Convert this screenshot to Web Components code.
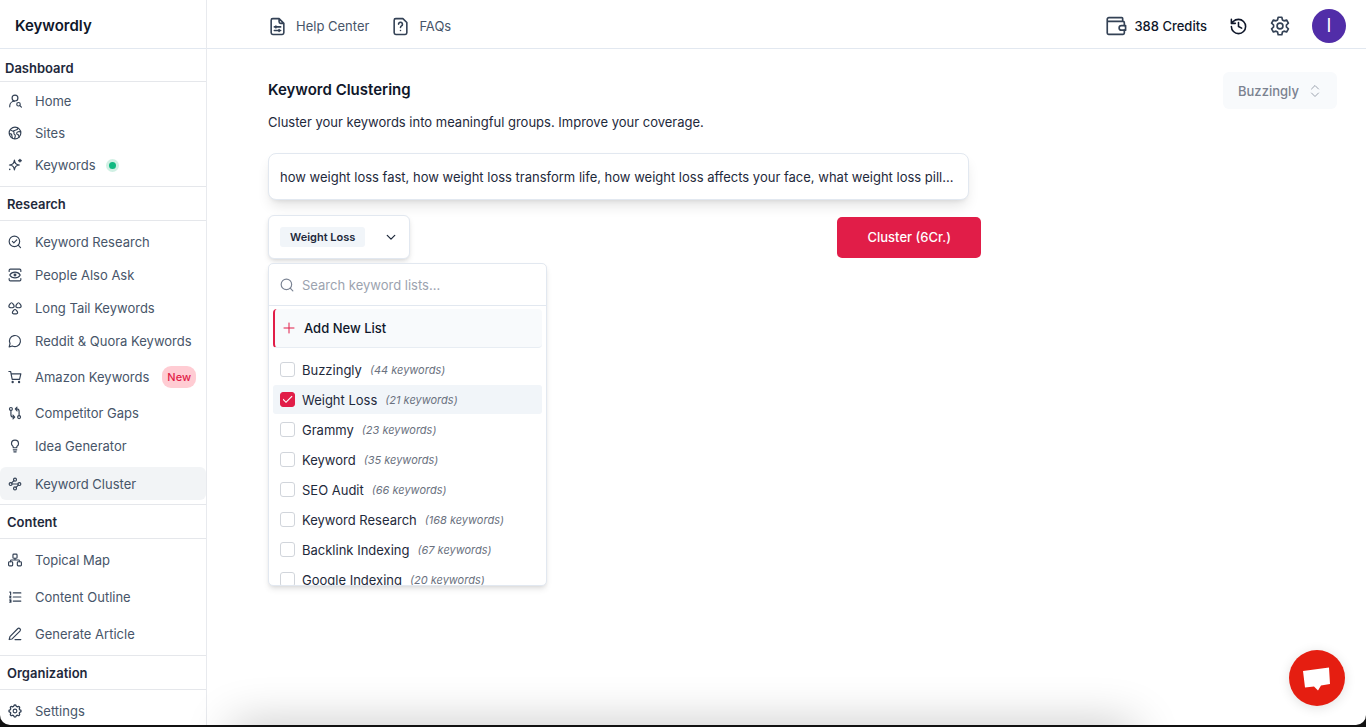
<!DOCTYPE html>
<html lang="en">
<head>
<meta charset="utf-8">
<meta name="viewport" content="width=device-width, initial-scale=1">
<title>Keywordly</title>
<style>
  body {
    margin: 0;
    background: #111;
    font-family: Inter, "Liberation Sans", sans-serif;
    font-size: 13px;
    line-height: 20px;
    color: #1e293b;
  }
</style>
</head>
<body>
<kw-app>
  <kw-sidebar slot="sidebar">
    <kw-nav-group heading="Dashboard" class="first">
      <kw-nav-item icon="user-search">Home</kw-nav-item>
      <kw-nav-item icon="world">Sites</kw-nav-item>
      <kw-nav-item icon="sparkles" dot>Keywords</kw-nav-item>
    </kw-nav-group>
    <kw-nav-group heading="Research">
      <kw-nav-item icon="search-check">Keyword Research</kw-nav-item>
      <kw-nav-item icon="eye-scan">People Also Ask</kw-nav-item>
      <kw-nav-item icon="triad">Long Tail Keywords</kw-nav-item>
      <kw-nav-item icon="message">Reddit &amp; Quora Keywords</kw-nav-item>
      <kw-nav-item icon="cart" badge="New">Amazon Keywords</kw-nav-item>
      <kw-nav-item icon="compare">Competitor Gaps</kw-nav-item>
      <kw-nav-item icon="bulb">Idea Generator</kw-nav-item>
      <kw-nav-item icon="waypoints" active>Keyword Cluster</kw-nav-item>
    </kw-nav-group>
    <kw-nav-group heading="Content" class="loose">
      <kw-nav-item icon="network">Topical Map</kw-nav-item>
      <kw-nav-item icon="list">Content Outline</kw-nav-item>
      <kw-nav-item icon="pen">Generate Article</kw-nav-item>
    </kw-nav-group>
    <kw-nav-group heading="Organization">
      <kw-nav-item icon="gear">Settings</kw-nav-item>
    </kw-nav-group>
  </kw-sidebar>

  <kw-topbar slot="topbar" credits="388 Credits" initial="I"></kw-topbar>

  <kw-cluster-page>
    <kw-list-picker selected="Weight Loss"></kw-list-picker>
  </kw-cluster-page>
</kw-app>

<script>
const ICONS = {
  "user-search": '<circle cx="12" cy="7" r="5"/><path d="M3 22v-2a8 8 0 0 1 8-7.500"/><circle cx="18" cy="17.500" r="3"/><path d="m23 22.500-2.600-2.600"/>',
  world: '<circle cx="12" cy="12" r="10"/><path d="M4 6c2 3 5 2 6 4s-1 3 1 4 2 4 0 7.500M21.500 10c-3-1-6 0-6.500 2s1 3 3 3l1 4M17 3.500c0 2.500-2 3-3 3s-2 2-4 1.500M2.500 13c2 0 4 1 4 3s0 2 1 4"/>',
  sparkles: '<path d="M11 3.500c1 6 2.500 7.500 8.500 8.500-6 1-7.500 2.500-8.500 8.500-1-6-2.500-7.500-8.500-8.500 6-1 7.500-2.500 8.500-8.500z"/><path d="M20.500 2.500v4M18.500 4.500h4M3 19.500h.01" stroke-width="2.600"/>',
  "search-check": '<circle cx="11" cy="11" r="9"/><path d="m21.500 21.500-4-4M7.500 11l2.500 2.500 5-5"/>',
  "eye-scan": '<path d="M2 6V4a2 2 0 0 1 2-2h16a2 2 0 0 1 2 2v2M2 18v2a2 2 0 0 0 2 2h16a2 2 0 0 0 2-2v-2"/><path d="M3 12c2-3.300 5-5 9-5s7 1.700 9 5c-2 3.300-5 5-9 5s-7-1.700-9-5z"/><circle cx="12" cy="12" r="1.500"/>',
  triad: '<path d="M6 3c1.500 0 4.500 4.500 4.500 6S9 11.500 6 11.500 1.500 10.500 1.500 9 4.500 3 6 3zM18 3c1.500 0 4.500 4.500 4.500 6s-1.500 2.500-4.500 2.500-4.500-1-4.500-2.500S16.500 3 18 3zM12 14.500c1.500 0 4.500 3.500 4.500 5.500S15 22 12 22s-4.500 0-4.500-2 3-5.500 4.500-5.500z"/>',
  message: '<path d="M7.500 20.500A9.500 9.500 0 1 0 3.500 16.500L2 22z"/>',
  cart: '<circle cx="8" cy="20.500" r="1"/><circle cx="19" cy="20.500" r="1"/><path d="M1.500 2.500h3l2.700 13.500h12.600L22 6.500H5.300"/>',
  compare: '<circle cx="5" cy="5" r="2.500"/><circle cx="19" cy="19" r="2.500"/><path d="M5 7.500V15a4 4 0 0 0 4 4h2M8.500 15.500 11.500 19l-3 3M19 16.500V9a4 4 0 0 0-4-4h-2M15.500 2 12.500 5l3 3.500"/>',
  bulb: '<path d="M15 14c.2-1 .7-1.700 1.500-2.500 1-.9 1.500-2.200 1.500-3.500A6 6 0 0 0 6 8c0 1 .2 2.200 1.500 3.500.7.700 1.300 1.500 1.500 2.500v1h6zM9 18.500h6M10 22h4"/>',
  waypoints: '<circle cx="12" cy="4.500" r="2.500"/><path d="m10.200 6.300-3.900 3.900"/><circle cx="4.500" cy="12" r="2.500"/><path d="M7 12h10"/><circle cx="19.500" cy="12" r="2.500"/><path d="m13.800 17.700 3.900-3.900"/><circle cx="12" cy="19.500" r="2.500"/>',
  network: '<rect x="16" y="15" width="7" height="7" rx="1.500"/><rect x="1" y="15" width="7" height="7" rx="1.500"/><rect x="8.500" y="2" width="7" height="7" rx="1.500"/><path d="M4.500 15v-2a1 1 0 0 1 1-1h13a1 1 0 0 1 1 1v2M12 12V9"/>',
  list: '<path d="M9 5h13M9 12h13M9 19h13M3 3.500h1.500v4M3 10.500h2L3 13.500h2M3 17h2v4H3M3.500 19H5"/>',
  pen: '<path d="M12 21.500h10M16.500 3a2.800 2.800 0 0 1 4 4L7 20.500l-5 1 1.300-5z"/>',
  gear: '<path d="M10.300 4.300c.4-1.700 3-1.700 3.400 0a1.700 1.700 0 0 0 2.600 1.100c1.500-1 3.300.8 2.400 2.400a1.700 1.700 0 0 0 1 2.500c1.800.4 1.800 3 0 3.400a1.700 1.700 0 0 0-1 2.600c.9 1.500-.9 3.300-2.400 2.400a1.700 1.700 0 0 0-2.600 1c-.4 1.800-3 1.800-3.400 0a1.700 1.700 0 0 0-2.600-1c-1.500.9-3.300-.9-2.400-2.400a1.700 1.700 0 0 0-1-2.600c-1.800-.4-1.800-3 0-3.400a1.700 1.700 0 0 0 1-2.500c-.9-1.600.9-3.400 2.400-2.400 1 .6 2.300 0 2.600-1.100z" transform="matrix(1.150 0 0 1.150 -1.800 -1.800)"/><circle cx="12" cy="12" r="3.200"/>',
  // six teeth, drawn for the larger sizes
  cog: '<path d="M9.800 1.500h4.400l.7 3.200 1.900 1.100 3.100-1 2.200 3.800-2.400 2.200v2.400l2.400 2.200-2.200 3.800-3.100-1-1.900 1.100-.7 3.200H9.800l-.7-3.200-1.900-1.100-3.100 1-2.200-3.800 2.400-2.200v-2.400L1.900 8.600l2.200-3.800 3.100 1 1.900-1.100z"/><circle cx="12" cy="12" r="3.500"/>',
  "doc-text": '<path d="M14 2H6a2 2 0 0 0-2 2v16a2 2 0 0 0 2 2h12a2 2 0 0 0 2-2V8zM14 2v4a2 2 0 0 0 2 2h4M8 12.500h8M8 17h8M10 11.300v2.400M14 15.800v2.400"/>',
  "doc-question": '<path d="M15 2H6a2 2 0 0 0-2 2v16a2 2 0 0 0 2 2h12a2 2 0 0 0 2-2V7zM9.500 9a2.500 2.500 0 1 1 3.800 2.200c-.8.500-1.300 1-1.300 2M12 17h.01"/>',
  wallet: '<path d="M20 6.500V3a1 1 0 0 0-1-1H3.500A2 2 0 0 0 1.500 4v16.500A1.500 1.500 0 0 0 3 22h17.500a1.500 1.500 0 0 0 1.500-1.500V17M1.500 5a1.500 1.500 0 0 0 1.500 1.500h17.500A1.500 1.500 0 0 1 22 8v3.500"/><path d="M23.500 11.500h-5a2.700 2.700 0 0 0 0 5.500h5z"/>',
  history: '<path d="M3 12a9 9 0 1 0 9-9 9.750 9.750 0 0 0-6.740 2.740L3 8M3 3v5h5M12 7v5l4 2"/>',
  search: '<circle cx="11" cy="11" r="9"/><path d="m22 22-4.500-4.500"/>',
  plus: '<path d="M2 12h20M12 2v20"/>',
  chevron: '<path d="m3 8 9 9 9-9"/>',
  updown: '<path d="m5 8 7-7 7 7M5 16l7 7 7-7"/>'
};

// <kw-icon name="" size="">: strokes follow the current colour
class KwIcon extends HTMLElement {
  constructor() {
    super();
    this.attachShadow({ mode: "open" });
  }

  connectedCallback() {
    const size = this.getAttribute("size") || 14;
    const weight = this.getAttribute("weight") || 2;
    this.shadowRoot.innerHTML = `
      <style>
        :host { display: inline-flex; flex: none; }
        svg { display: block; overflow: visible; }
      </style>
      <svg width="${size}" height="${size}" viewBox="0 0 24 24" fill="none" stroke="currentColor"
        stroke-width="${weight}" stroke-linecap="round" stroke-linejoin="round" aria-hidden="true">
        ${ICONS[this.getAttribute("name")] || ""}
      </svg>
    `;
  }
}

class KwApp extends HTMLElement {
  constructor() {
    super();
    this.attachShadow({ mode: "open" }).innerHTML = `
      <style>
        :host {
          display: grid;
          grid-template-columns: 207px minmax(0, 1fr);
          grid-template-rows: auto 1fr;
          position: relative;
          box-sizing: border-box;
          height: calc(100vh - 2px);
          overflow: hidden;
          background: #fff;
          border-radius: 0 0 10px 10px;
        }
        ::slotted([slot="sidebar"]) { grid-row: 1 / 3; }
        .shade {
          position: absolute;
          top: 100%;
          left: 17%;
          right: 17%;
          height: 40px;
          box-shadow: 0 0 48px rgba(0, 0, 0, 0.24);
          pointer-events: none;
        }
        .chat {
          position: absolute;
          right: 21px;
          bottom: 19px;
          width: 56px;
          height: 56px;
          padding: 0;
          border: 0;
          border-radius: 50%;
          background: #e51e11;
          box-shadow: 0 2px 12px rgba(0, 0, 0, 0.12);
        }
        .chat svg { display: block; }
      </style>
      <slot name="sidebar"></slot>
      <slot name="topbar"></slot>
      <slot></slot>
      <div class="shade"></div>
      <button class="chat" type="button" aria-label="Open chat">
        <svg width="56" height="56" viewBox="0 0 56 56"><path d="M14 21 40 17.500 41 34 32 35.500 29 40.500 25 36.500 16 37.500z" fill="#fff"/></svg>
      </button>
    `;
  }
}

class KwSidebar extends HTMLElement {
  constructor() {
    super();
    this.attachShadow({ mode: "open" }).innerHTML = `
      <style>
        :host { display: block; border-right: 1px solid #e8eaee; }
        .brand {
          display: flex;
          align-items: center;
          box-sizing: border-box;
          height: 49px;
          padding: 4px 15px 0;
          border-bottom: 1px solid #e2e8f0;
          font-size: 15px;
          font-weight: 600;
          color: #0f172a;
        }
      </style>
      <div class="brand">Keywordly</div>
      <nav aria-label="Main"><slot></slot></nav>
    `;
  }
}

class KwNavGroup extends HTMLElement {
  constructor() {
    super();
    this.attachShadow({ mode: "open" });
  }

  connectedCallback() {
    this.shadowRoot.innerHTML = `
      <style>
        :host { display: block; --item-height: 33px; }
        h2 {
          margin: 0;
          padding: 7px 7px 6px;
          border-top: 1px solid #e5e7eb;
          border-bottom: 1px solid #e5e7eb;
          font-size: 13px;
          line-height: 20px;
          font-weight: 600;
          color: #1e293b;
        }
        .items { padding: 4px 0; }
        :host(.first) { --item-height: 32px; }
        :host(.first) h2 { border-top: 0; padding: 9px 5px 3px; }
        :host(.first) .items { padding: 3px 0 5px; }
        :host(.loose) .items { display: grid; gap: 4px; padding: 4px 0 5px; }
      </style>
      <h2>${this.getAttribute("heading")}</h2>
      <div class="items"><slot></slot></div>
    `;
  }
}

class KwNavItem extends HTMLElement {
  constructor() {
    super();
    this.attachShadow({ mode: "open" });
  }

  connectedCallback() {
    const badge = this.getAttribute("badge");
    this.shadowRoot.innerHTML = `
      <style>
        :host { display: block; }
        a {
          display: flex;
          align-items: center;
          height: var(--item-height);
          padding: 0 8px;
          border-radius: 6px;
          text-decoration: none;
          color: #475569;
          white-space: nowrap;
        }
        kw-icon { margin-right: 13px; color: #334155; }
        :host([active]) { padding-top: 5px; }
        :host([active]) a { background: #f2f4f6; }
        :host([badge]) a { height: 39px; }
        .dot {
          width: 7px;
          height: 7px;
          margin-left: 10px;
          border: 3px solid #d1f0e4;
          border-radius: 50%;
          background: #10b981;
        }
        .badge {
          margin-left: 13px;
          padding: 0 5px;
          border-radius: 9px;
          background: #ffccd3;
          color: #e11d48;
          font-size: 11px;
          line-height: 22px;
          font-weight: 500;
        }
      </style>
      <a href="#"${this.hasAttribute("active") ? ' aria-current="page"' : ""}>
        <kw-icon name="${this.getAttribute("icon")}"></kw-icon>
        <slot></slot>
        ${this.hasAttribute("dot") ? '<span class="dot"></span>' : ""}
        ${badge ? `<span class="badge">${badge}</span>` : ""}
      </a>
    `;
  }
}

class KwTopbar extends HTMLElement {
  constructor() {
    super();
    this.attachShadow({ mode: "open" });
  }

  connectedCallback() {
    this.shadowRoot.innerHTML = `
      <style>
        :host {
          display: flex;
          align-items: center;
          justify-content: space-between;
          box-sizing: border-box;
          height: 49px;
          padding: 4px 20px 0 61px;
          border-bottom: 1px solid #e2e8f0;
        }
        nav, .tools { display: flex; align-items: center; }
        nav, .tools { gap: 22px; }
        a, .credits { display: flex; align-items: center; gap: 9px; }
        a { color: #475569; text-decoration: none; }
        .credits { font-weight: 500; color: #0f172a; gap: 8px; }
        kw-icon { color: #334155; }
        .recent kw-icon { color: #0f172a; }
        button {
          display: flex;
          padding: 0;
          border: 0;
          background: none;
          font: inherit;
        }
        .avatar {
          width: 34px;
          height: 34px;
          align-items: center;
          justify-content: center;
          border-radius: 50%;
          background: #512da8;
          color: #fff;
          font-size: 18px;
        }
      </style>
      <nav aria-label="Help">
        <a href="#"><kw-icon name="doc-text" size="19"></kw-icon>Help Center</a>
        <a href="#"><kw-icon name="doc-question" size="19"></kw-icon>FAQs</a>
      </nav>
      <div class="tools">
        <span class="credits"><kw-icon name="wallet" size="20"></kw-icon>${this.getAttribute("credits")}</span>
        <button type="button" class="recent" aria-label="History"><kw-icon name="history" size="19"></kw-icon></button>
        <button type="button" aria-label="Settings"><kw-icon name="cog" size="20"></kw-icon></button>
        <button type="button" class="avatar" aria-label="Account">${this.getAttribute("initial")}</button>
      </div>
    `;
  }
}

class KwClusterPage extends HTMLElement {
  constructor() {
    super();
    this.attachShadow({ mode: "open" }).innerHTML = `
      <style>
        :host { display: block; padding: 23px 29px 0 61px; }
        header { display: flex; justify-content: space-between; align-items: flex-start; }
        h1 {
          margin: 8px 0 12px;
          font-size: 15px;
          line-height: 20px;
          font-weight: 600;
          color: #0f172a;
        }
        p { margin: 0; }
        .site {
          display: flex;
          align-items: center;
          padding-right: 16px;
          border-radius: 6px;
          background: #f8fafc;
          color: #9ca3af;
        }
        select {
          appearance: none;
          height: 37px;
          padding: 0 10px 0 15px;
          border: 0;
          background: none;
          font: inherit;
          font-weight: 500;
          color: #7b8290;
          opacity: 1;
        }
        form { max-width: 713px; margin-top: 21px; }
        .keywords {
          display: block;
          box-sizing: border-box;
          width: calc(100% - 12px);
          height: 47px;
          padding: 0 11px;
          border: 1px solid #e2e8f0;
          border-radius: 8px;
          background: #fff;
          box-shadow: 0 8px 14px -3px rgba(0, 0, 0, 0.12), 0 3px 5px -3px rgba(0, 0, 0, 0.1);
          font: inherit;
          color: #1e293b;
          text-overflow: ellipsis;
        }
        .actions {
          display: flex;
          align-items: center;
          justify-content: space-between;
          margin-top: 15px;
        }
        .run {
          height: 41px;
          padding: 0 30px;
          border: 0;
          border-radius: 5px;
          background: #e11d48;
          font: inherit;
          font-weight: 500;
          color: #fff;
        }
      </style>
      <header>
        <div>
          <h1>Keyword Clustering</h1>
          <p>Cluster your keywords into meaningful groups. Improve your coverage.</p>
        </div>
        <div class="site">
          <select aria-label="Site" disabled><option>Buzzingly</option></select>
          <kw-icon name="updown" size="12"></kw-icon>
        </div>
      </header>
      <form>
        <input class="keywords" type="text" aria-label="Keywords"
          value="how weight loss fast, how weight loss transform life, how weight loss affects your face, what weight loss pill...">
        <div class="actions">
          <slot></slot>
          <button class="run" type="button">Cluster (6Cr.)</button>
        </div>
      </form>
    `;
  }
}

const LISTS = [
  ["Buzzingly", 44],
  ["Weight Loss", 21],
  ["Grammy", 23],
  ["Keyword", 35],
  ["SEO Audit", 66],
  ["Keyword Research", 168],
  ["Backlink Indexing", 67],
  ["Google Indexing", 20]
];

class KwListPicker extends HTMLElement {
  constructor() {
    super();
    this.attachShadow({ mode: "open" });
  }

  connectedCallback() {
    const selected = this.getAttribute("selected");
    const rows = LISTS.map(([name, count], i) => `
      <li class="${name === selected ? "on" : ""}">
        <input type="checkbox" id="list-${i}"${name === selected ? " checked" : ""}>
        <label for="list-${i}">${name} <em>(${count} keywords)</em></label>
      </li>`).join("");

    this.shadowRoot.innerHTML = `
      <style>
        :host { display: block; position: relative; }
        button { font: inherit; color: inherit; text-align: left; }
        .trigger {
          display: flex;
          align-items: center;
          gap: 21px;
          height: 44px;
          padding: 0 13px 0 11px;
          border: 1px solid #e2e8f0;
          border-radius: 6px;
          background: #fff;
          box-shadow: 0 3px 6px -1px rgba(0, 0, 0, 0.12), 0 2px 4px -2px rgba(0, 0, 0, 0.1);
        }
        .chip {
          padding: 0 10px;
          border-radius: 3px;
          background: #f1f5f9;
          font-size: 11px;
          font-weight: 600;
        }
        .panel {
          position: absolute;
          top: calc(100% + 4px);
          left: 0;
          z-index: 2;
          box-sizing: border-box;
          width: 279px;
          max-height: 323px;
          overflow: hidden;
          border: 1px solid #e2e8f0;
          border-radius: 5px;
          background: #fff;
          box-shadow: 0 4px 6px -1px rgba(0, 0, 0, 0.1), 0 2px 4px -2px rgba(0, 0, 0, 0.1);
        }
        .search {
          display: flex;
          align-items: center;
          gap: 8px;
          height: 41px;
          padding: 0 11px;
          border-bottom: 1px solid #e2e8f0;
          color: #7b8494;
        }
        .search input {
          flex: 1;
          min-width: 0;
          padding: 0;
          border: 0;
          outline: 0;
          font: inherit;
        }
        .search input::placeholder { color: #9ca3af; opacity: 1; }
        .add {
          display: flex;
          align-items: center;
          gap: 9px;
          width: calc(100% - 8px);
          height: 39px;
          margin: 3px 4px 7px;
          padding: 0 8px;
          border: 0;
          border-left: 2px solid #e11d48;
          border-bottom: 1px solid #e8edf3;
          border-radius: 4px;
          background: #f8fafc;
          font-weight: 500;
          color: #0f172a;
        }
        .add kw-icon { color: #e11d48; }
        ul { margin: 0; padding: 0 4px; list-style: none; display: grid; gap: 1px; }
        li {
          display: flex;
          align-items: center;
          height: 29px;
          padding: 0 7px;
          border-radius: 3px;
        }
        li.on { background: #f1f5f9; }
        li input {
          appearance: none;
          flex: none;
          width: 15px;
          height: 15px;
          margin: 0 7px 0 0;
          border: 1px solid #d1d5db;
          border-radius: 3px;
          background: #fff;
        }
        li input:checked {
          display: grid;
          place-items: center;
          border-color: #e11d48;
          background: #e11d48;
        }
        li input:checked::before {
          content: "";
          width: 10px;
          height: 10px;
          background: #fff;
          clip-path: polygon(0 50%, 8% 42%, 35% 70%, 92% 13%, 100% 21%, 35% 86%);
        }
        label { display: flex; align-items: center; gap: 8px; }
        em { font-size: 11px; color: #6b7280; }
      </style>
      <button class="trigger" type="button" aria-haspopup="listbox" aria-expanded="true">
        <span class="chip">${selected}</span>
        <kw-icon name="chevron" size="10" weight="3"></kw-icon>
      </button>
      <div class="panel">
        <div class="search">
          <kw-icon name="search" size="14"></kw-icon>
          <input type="text" placeholder="Search keyword lists..." aria-label="Search keyword lists">
        </div>
        <button class="add" type="button"><kw-icon name="plus" size="12"></kw-icon>Add New List</button>
        <ul>${rows}</ul>
      </div>
    `;
  }
}

customElements.define("kw-icon", KwIcon);
customElements.define("kw-app", KwApp);
customElements.define("kw-sidebar", KwSidebar);
customElements.define("kw-nav-group", KwNavGroup);
customElements.define("kw-nav-item", KwNavItem);
customElements.define("kw-topbar", KwTopbar);
customElements.define("kw-cluster-page", KwClusterPage);
customElements.define("kw-list-picker", KwListPicker);
</script>
</body>
</html>
